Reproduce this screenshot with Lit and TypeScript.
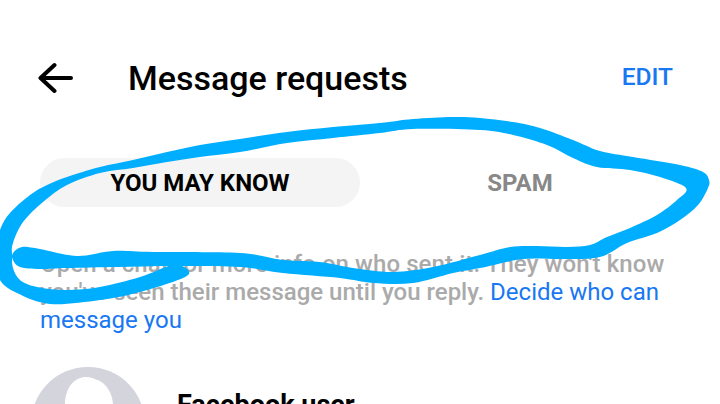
import { LitElement, html, css, svg } from "lit";
import { customElement } from "lit/decorators.js";

const PTS: [number, number][] = [
  [22,247],[40,249],[77,256],[113,251],[153,252],[240,253],[283,260],[320,262],[353,268],[393,272],[433,267],[480,255],[510,247],[537,246],[567,247],[590,245],[607,237],[630,228],[657,215],[677,200],[686,188],
  [660,177],[630,170],[597,167],[573,158],[547,145],[513,135],[480,130],[413,129],[380,133],[333,138],[287,143],[240,152],[200,157],[167,162],[133,168],[100,173],[67,185],[43,202],[23,222],[13,243],[12,255],[13,268],[20,280],[37,287],[67,290],[100,287],[140,277],[173,265],[188,270],[183,278],[140,292],[100,300],[50,304],[17,293],[0,280],[-6,255],[0,230],[10,213],[30,195],[47,185],[67,177],[100,167],[133,160],[167,152],[200,145],[240,139],[287,132],[333,127],[380,123],[413,119],[453,117],[480,118],[513,122],[540,128],[573,140],[600,151],[633,157],[680,165],[703,172],[709,180],[708,188],[698,205],[680,220],[657,233],[627,243],[600,257],[563,259],[523,259],[480,268],[453,273],[413,283],[373,283],[340,278],[283,273],[240,267],[173,266],[117,267],[67,268],[40,269],[20,267],[13,260],[13,253],
];

function smooth(p: [number, number][]): string {
  const n = p.length;
  let d = `M${p[0][0]} ${p[0][1]}`;
  for (let i = 0; i < n; i++) {
    const a = p[(i - 1 + n) % n], b = p[i], c = p[(i + 1) % n], e = p[(i + 2) % n];
    const c1x = b[0] + (c[0] - a[0]) / 6, c1y = b[1] + (c[1] - a[1]) / 6;
    const c2x = c[0] - (e[0] - b[0]) / 6, c2y = c[1] - (e[1] - b[1]) / 6;
    d += `C${c1x.toFixed(1)} ${c1y.toFixed(1)} ${c2x.toFixed(1)} ${c2y.toFixed(1)} ${c[0]} ${c[1]}`;
  }
  return d + "Z";
}

@customElement("app-root")
export class AppRoot extends LitElement {
  static styles = css`
    :host { display: block; position: relative; width: 720px; height: 404px; overflow: hidden; background: #fff; font-family: Roboto, "Liberation Sans", sans-serif; }
    .header { display: flex; align-items: center; height: 60px; padding: 48px 47px 0 38px; }
    .back { width: 36px; height: 32px; display: block; }
    .title { margin-left: 54px; flex: 1; font-size: 34px; font-weight: 500; color: #000; line-height: 60px; }
    .edit { font-size: 24.5px; font-weight: 500; color: #1877f2; margin-bottom: 3px; }
    .tabs { display: flex; margin: 50px 40px 0; height: 49px; }
    .tab { flex: 1; display: flex; align-items: center; justify-content: center; box-sizing: border-box; padding-top: 1px; border-radius: 25px; font-size: 24px; font-weight: 700; color: #888; }
    .tab.on { background: #f4f4f4; color: #000; }
    .info { margin: 43px 40px 0; font-size: 24px; font-weight: 500; line-height: 28px; color: #aaa; }
    .lead { letter-spacing: 0.09px; }
    .info a { color: #1877f2; font-weight: 400; text-decoration: none; }
    .row { display: flex; gap: 32px; margin: 33px 0 0 31px; }
    .avatar { width: 114px; height: 114px; flex: none; display: block; }
    .name { font-size: 27px; font-weight: 700; color: #000; margin-top: 22px; }
    .ink { position: absolute; left: 0; top: 0; width: 720px; height: 404px; pointer-events: none; }
  `;

  render() {
    return html`
      <div class="header">
        <svg class="back" viewBox="0 0 36 32" fill="none" stroke="#000" stroke-width="4" stroke-linecap="round" stroke-linejoin="round">
          <path d="M2.5 16H33M16.5 3L2.5 16L16.5 29" />
        </svg>
        <div class="title">Message requests</div>
        <div class="edit">EDIT</div>
      </div>
      <div class="tabs">
        <div class="tab on">YOU MAY KNOW</div>
        <div class="tab">SPAM</div>
      </div>
      <div class="info"><span class="lead">Open a chat for more info on who sent it. They won't know</span> you've seen their message until you reply. <a>Decide who can message you</a></div>
      <div class="row">
        <svg class="avatar" viewBox="0 0 114 114">
          <circle cx="57" cy="57" r="57" fill="#d3d4dc" />
          <path d="M55 10C44 10 34 20 34 38C34 50 40 60 47 66H67C75 60 82 50 82 38C82 24 72 14 66 13C62 11 59 10 55 10Z" fill="#fff" />
        </svg>
        <div class="name">Facebook user</div>
      </div>
      <svg class="ink" viewBox="0 0 720 404">${svg`<path d=${smooth(PTS)} fill="#00aeff" />`}</svg>
    `;
  }
}
